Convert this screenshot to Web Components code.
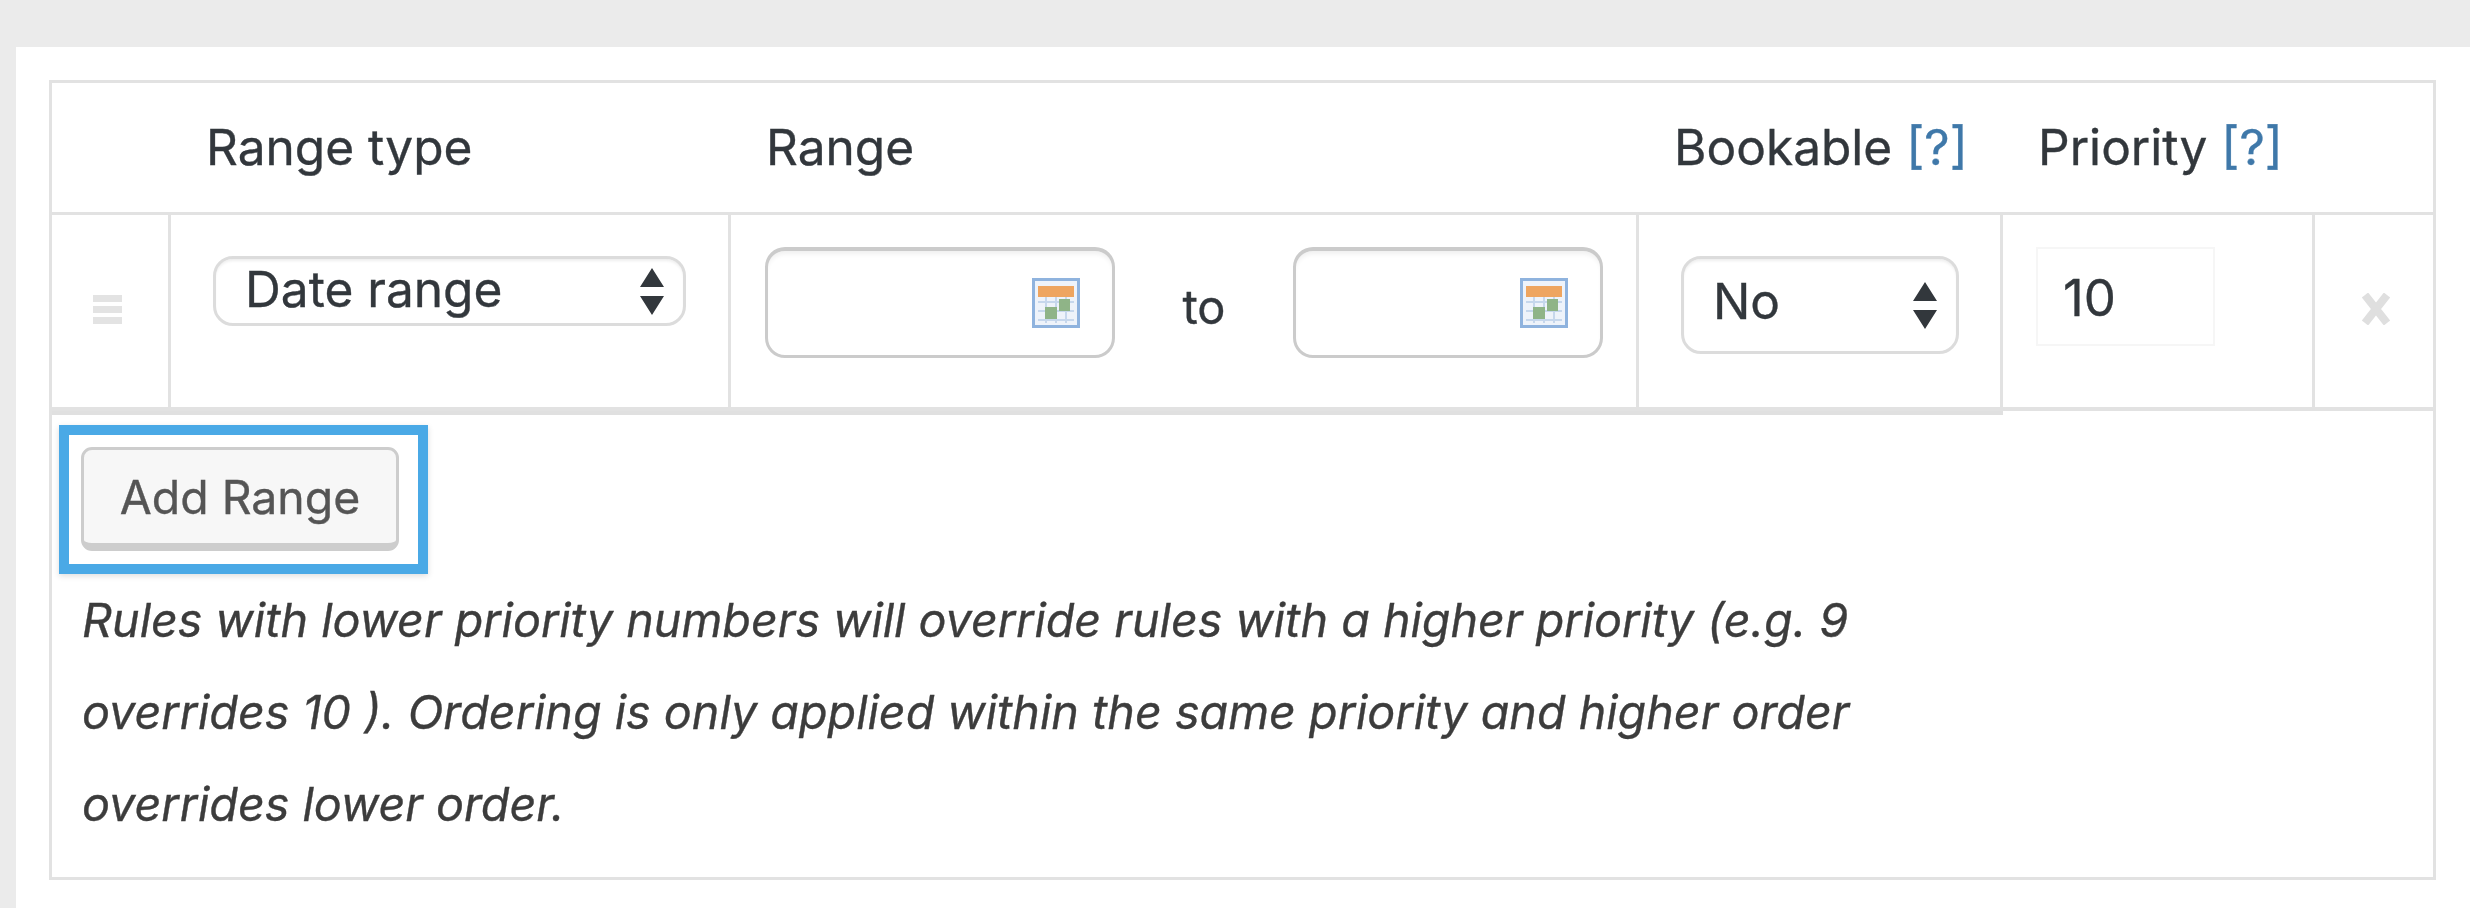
<!DOCTYPE html>
<html>
<head>
<meta charset="utf-8">
<title>Availability ranges</title>
<style>
    html, body { margin: 0; background: #ebebeb; }
    body {
        font: 49.6px/1.2 Inter, "Liberation Sans", sans-serif;
        color: #32373c;
        -webkit-text-stroke: .35px currentColor;
    }
</style>
</head>
<body>
<range-panel>
    <range-table>
        <range-row head>
            <range-cell></range-cell>
            <range-cell style="--pad: 0 0 0 35px">Range type</range-cell>
            <range-cell style="--pad: 0 0 0 35px">Range</range-cell>
            <range-cell style="--pad: 0 0 0 35px">Bookable <help-tip></help-tip></range-cell>
            <range-cell style="--pad: 0 0 0 35px">Priority <help-tip></help-tip></range-cell>
            <range-cell></range-cell>
        </range-row>
        <range-row>
            <range-cell divided style="--pad: 80px 0 0 41px"><icon-drag></icon-drag></range-cell>
            <range-cell divided style="--pad: 41px 0 0 42px"><pick-list style="--w: 473px; --h: 70px; --inset: 29px; --drop: 3px">Date range</pick-list></range-cell>
            <range-cell divided style="--pad: 32px 0 0 34px"><date-pair></date-pair></range-cell>
            <range-cell divided style="--pad: 41px 0 0 42px"><pick-list style="--w: 278px; --h: 98px; --inset: 29px; --drop: 6px">No</pick-list></range-cell>
            <range-cell divided style="--pad: 32px 0 0 33px"><number-box>10</number-box></range-cell>
            <range-cell style="--pad: 78px 0 0 45px"><icon-remove></icon-remove></range-cell>
        </range-row>
        <range-shelf></range-shelf>
        <range-footer>
            <callout-box><add-button>Add Range</add-button></callout-box>
            <range-note>Rules with lower priority numbers will override rules with a higher priority (e.g. 9<br>overrides 10 ). Ordering is only applied within the same priority and higher order<br>overrides lower order.</range-note>
        </range-footer>
    </range-table>
</range-panel>

<script>
// small helper, every element below is just markup + styles in an open shadow root
function define(name, html) {
    customElements.define(name, class extends HTMLElement {
        constructor() {
            super();
            this.attachShadow({mode: 'open'});
            this.shadowRoot.innerHTML = html;
        }
    });
}

define('range-panel', `
    <style>
        :host {
            display: block;
            box-sizing: border-box;
            height: 861px;
            margin: 47px 0 0 16px;
            padding: 33px 0 0 33px;
            background: #fff;
            filter: blur(.7px);
        }
    </style>
    <slot></slot>`);

define('range-table', `
    <style>
        :host {
            display: block;
            box-sizing: border-box;
            width: 2387px;
            height: 800px;
            border: 3px solid #e2e2e2;
        }
    </style>
    <slot></slot>`);

define('range-row', `
    <style>
        :host {
            display: grid;
            grid-template-columns: 119px 560px 908px 364px 312px 118px;
            height: 192px;
            border-bottom: 4px solid #e2e2e2;
            box-sizing: content-box;
        }
        :host([head]) {
            height: 129px;
            border-bottom-width: 3px;
            align-items: center;
        }
    </style>
    <slot></slot>`);

define('range-cell', `
    <style>
        :host {
            display: block;
            box-sizing: border-box;
            padding: var(--pad, 0);
        }
        :host([divided]) {
            height: 100%;
            border-right: 3px solid #e2e2e2;
        }
    </style>
    <slot></slot>`);

define('range-shelf', `
    <style>
        :host {
            display: block;
            width: 1951px;
            height: 4px;
            background: #e0e0e0;
        }
    </style>`);

define('help-tip', `
    <style>
        :host { display: inline; color: #3f78a9; }
    </style>[?]`);

define('icon-drag', `
    <style>
        :host { display: block; width: 29px; height: 29px; }
        svg { display: block; }
    </style>
    <svg width="29" height="29" viewBox="0 0 29 29">
        <path fill="#e3e3e3" d="M0 0h29v7H0zM0 11h29v7H0zM0 22h29v7H0z"/>
    </svg>`);

define('icon-remove', `
    <style>
        :host { display: block; width: 32px; height: 32px; }
        svg { display: block; }
    </style>
    <svg width="32" height="32" viewBox="0 0 32 32">
        <path fill="none" stroke="#dfdfdf" stroke-width="8" d="M5 2l22 28M27 2L5 30"/>
    </svg>`);

define('pick-list', `
    <style>
        :host {
            display: flex;
            align-items: center;
            justify-content: space-between;
            box-sizing: border-box;
            width: var(--w);
            height: var(--h);
            padding: 0 19px 0 var(--inset);
            border: 3px solid #dcdcdc;
            border-radius: 20px;
            background: #fff;
            box-shadow: inset 0 3px 3px -1px #eee;
        }
        span { margin-bottom: var(--drop); }
        svg { display: block; flex: none; }
    </style>
    <span><slot></slot></span>
    <svg width="24" height="47" viewBox="0 0 24 47">
        <path fill="#32373c" d="M12 0l12 19H0zM0 28h24L12 47z"/>
    </svg>`);

define('calendar-icon', `
    <style>
        :host { display: block; width: 48px; height: 50px; }
        svg { display: block; }
    </style>
    <svg width="48" height="50" viewBox="0 0 48 50">
        <rect x="1.5" y="1.5" width="45" height="47" fill="#eef3fa" stroke="#8fb3de" stroke-width="3"/>
        <rect x="6" y="8" width="36" height="11" fill="#eea560"/>
        <path fill="none" stroke="#c6d7ec" stroke-width="2" d="M6 24h36M6 33h36M6 42h36M14 19v26M24 19v26M34 19v26"/>
        <rect x="13" y="29" width="12" height="12" fill="#8fb487"/>
        <rect x="27" y="21" width="11" height="12" fill="#8fb487"/>
    </svg>`);

define('date-field', `
    <style>
        :host {
            display: flex;
            align-items: center;
            justify-content: flex-end;
            box-sizing: border-box;
            width: var(--w);
            height: 111px;
            padding-right: 32px;
            border: 3px solid #cbcbcb;
            border-top-width: 4px;
            border-radius: 20px;
            background: #fff;
            box-shadow: inset 0 5px 5px -2px #f0f0f0;
        }
    </style>
    <calendar-icon></calendar-icon>`);

define('date-pair', `
    <style>
        :host {
            display: grid;
            grid-template-columns: 350px 178px 310px;
            align-items: center;
        }
        span { text-align: center; font-size: 47px; padding-top: 9px; }
    </style>
    <date-field style="--w: 350px"></date-field>
    <span>to</span>
    <date-field style="--w: 310px"></date-field>`);

define('number-box', `
    <style>
        :host {
            display: flex;
            align-items: center;
            box-sizing: border-box;
            width: 179px;
            height: 99px;
            padding: 2px 0 0 25px;
            border: 2px solid #f6f6f6;
            background: #fff;
            font-size: 51px;
        }
    </style>
    <slot></slot>`);

define('range-footer', `
    <style>
        :host { display: block; padding: 10px 0 0 7px; }
    </style>
    <slot></slot>`);

define('callout-box', `
    <style>
        :host {
            display: block;
            box-sizing: border-box;
            width: 369px;
            height: 149px;
            padding: 12px;
            border: 10px solid #4aa9e6;
            box-shadow: 0 2px 6px #ddd;
        }
    </style>
    <slot></slot>`);

define('add-button', `
    <style>
        :host {
            display: flex;
            align-items: center;
            justify-content: center;
            box-sizing: border-box;
            width: 318px;
            height: 104px;
            padding-top: 3px;
            border: 3px solid #cdcdcd;
            border-bottom-width: 8px;
            border-radius: 11px;
            background: #f7f7f7;
            color: #555;
            font-size: 46.4px;
        }
    </style>
    <slot></slot>`);

define('range-note', `
    <style>
        :host {
            display: block;
            margin: 0 0 0 23px;
            font-size: 46.7px;
            font-style: italic;
            line-height: 92px;
            white-space: nowrap;
            color: #3c3c3c;
        }
    </style>
    <slot></slot>`);
</script>
</body>
</html>
